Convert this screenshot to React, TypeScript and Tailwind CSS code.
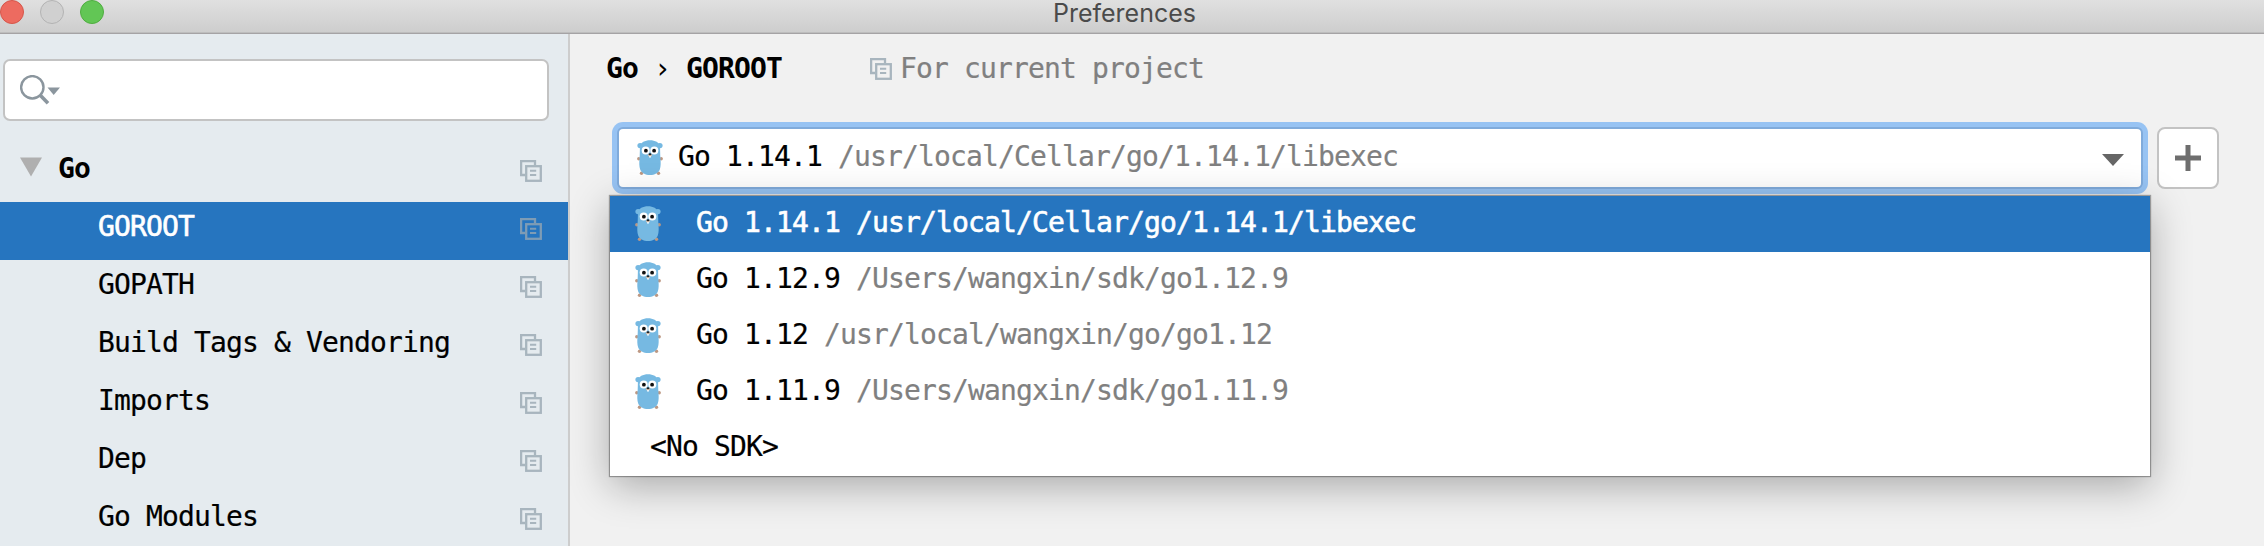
const mono =
  "font-['DejaVu_Sans_Mono','Liberation_Mono',monospace] text-[28px] leading-[32px] tracking-[-0.86px] whitespace-pre";

function CopyIcon({ className = "text-[#a8b5be]" }: { className?: string }) {
  return (
    <svg width="22" height="22" viewBox="0 0 22 22" fill="none" stroke="currentColor" strokeWidth="2.3" className={`shrink-0 ${className}`}>
      <path d="M5 15H1.100V1.100H15V5" />
      <rect x="6.200" y="6.200" width="14.600" height="14.600" />
      <path d="M10 10.700h6.200M10 15.100h6.200" strokeWidth="2" />
    </svg>
  );
}

function Gopher() {
  return (
    <svg width="26" height="35" viewBox="0 0 26 35" className="shrink-0">
      <g fill="#bd9883">
        <circle cx="1.800" cy="18.700" r="1.700" />
        <circle cx="24.200" cy="18.700" r="1.700" />
        <circle cx="4.500" cy="33.300" r="1.700" />
        <circle cx="21.500" cy="33.300" r="1.700" />
      </g>
      <g fill="#76b9e2">
        <circle cx="3.100" cy="5.600" r="2.700" />
        <circle cx="22.900" cy="5.600" r="2.700" />
        <path d="M13 .3C18 .3 22.500 2.500 23 6.500c.2 3 .1 7 .5 12.500.3 3.500.4 7-.7 10.500C21.600 33 17.500 35 13 35S4.400 33 3.200 29.500C2.100 26 2.200 22.500 2.500 19 2.900 13.500 2.800 9.500 3 6.500 3.500 2.500 8 .3 13 .3Z" />
      </g>
      <circle cx="8.700" cy="10.500" r="4" fill="#fff" />
      <circle cx="17.300" cy="10.500" r="4" fill="#fff" />
      <circle cx="8.900" cy="10.700" r="1.900" fill="#111" />
      <circle cx="17.100" cy="10.700" r="1.900" fill="#111" />
      <ellipse cx="13" cy="15.300" rx="2.100" ry="1.200" fill="#d9c0ac" />
      <ellipse cx="13" cy="14.200" rx="1.400" ry="1" fill="#222" />
      <rect x="12.200" y="15.900" width="1.600" height="1.700" fill="#fff" />
    </svg>
  );
}

const pages = ["GOROOT", "GOPATH", "Build Tags & Vendoring", "Imports", "Dep", "Go Modules"];

const sdks = [
  { name: "Go 1.14.1", path: "/usr/local/Cellar/go/1.14.1/libexec" },
  { name: "Go 1.12.9", path: "/Users/wangxin/sdk/go1.12.9" },
  { name: "Go 1.12", path: "/usr/local/wangxin/go/go1.12" },
  { name: "Go 1.11.9", path: "/Users/wangxin/sdk/go1.11.9" },
];

function TitleBar() {
  return (
    <header className="relative flex h-[34px] shrink-0 justify-center border-b border-[#a5a3a5] bg-linear-to-b from-[#e0e0e0] to-[#cdcdcd] shadow-[inset_0_-1px_0_#bdbdbd]">
      <div className="absolute top-0 left-0 flex gap-4">
        <span className="size-6 rounded-full border border-[#d6564a] bg-[#ed6b60]" />
        <span className="size-6 rounded-full border border-[#b3b3b3] bg-[#d0d0d0]" />
        <span className="size-6 rounded-full border border-[#4fad40] bg-[#62c655]" />
      </div>
      <h1 className="mr-[15px] h-[32px] font-['Inter',sans-serif] text-[25px] leading-[26px] text-[#4b4b4b]">Preferences</h1>
    </header>
  );
}

function Sidebar() {
  return (
    <aside className="w-[570px] shrink-0 border-r-2 border-[#cdcdcd] bg-[#e5ebef]">
      <div className="mt-[25px] ml-[3px] flex h-[62px] w-[546px] rounded-[7px] border-2 border-[#c3c3c3] bg-white pt-[14px] pl-[15px]">
        <svg width="42" height="32" viewBox="0 0 42 32" className="text-[#8b969e]">
          <circle cx="12.300" cy="12.300" r="11.200" fill="none" stroke="currentColor" strokeWidth="2.400" />
          <path d="m20.500 20.500 7.500 7.700" stroke="currentColor" strokeWidth="3.600" />
          <path d="M27.500 12.500H40L33.700 20Z" fill="currentColor" />
        </svg>
      </div>
      <nav className="mt-[23px]">
        <div className="flex h-[58px] items-start pr-[26px] pl-5">
          <svg width="22" height="20" viewBox="0 0 22 20" className="mt-[13px]">
            <path d="M0 0.500h22L11 19.500Z" fill="#afafaf" />
          </svg>
          <span className={`mt-[9px] ml-4 flex-1 font-bold text-black ${mono}`}>Go</span>
          <CopyIcon className="mt-4 text-[#a8b5be]" />
        </div>
        {pages.map((page, i) => (
          <div key={page} className={`flex h-[58px] items-start pr-[26px] pl-[98px] ${i === 0 ? "bg-[#2675bf] text-white" : "text-black"}`}>
            <span className={`mt-[9px] flex-1 ${i === 0 ? "[-webkit-text-stroke:0.6px_white]" : "[-webkit-text-stroke:0.2px_black]"} ${mono}`}>{page}</span>
            <CopyIcon className={i === 0 ? "mt-4 text-[#7e9cb5]" : "mt-4 text-[#a8b5be]"} />
          </div>
        ))}
      </nav>
    </aside>
  );
}

function SdkPopup() {
  return (
    <ul className="absolute top-[74px] left-[-2px] w-[1540px] bg-white shadow-[0_0_1px_1px_rgba(0,0,0,0.32),0_10px_38px_rgba(0,0,0,0.3)]">
      {sdks.map((sdk, i) => (
        <li key={sdk.name} className={`flex h-14 pl-[25px] ${i === 0 ? "bg-[#2675bf] text-white" : "text-black"}`}>
          <span className="mt-[10px]">
            <Gopher />
          </span>
          <span className={`mt-[11px] ml-[35px] ${i === 0 ? "[-webkit-text-stroke:0.6px_currentColor]" : "[-webkit-text-stroke:0.2px_currentColor]"} ${mono}`}>
            {sdk.name} <span className={i === 0 ? "text-white" : "text-[#808080]"}>{sdk.path}</span>
          </span>
        </li>
      ))}
      <li className={`h-14 pt-[11px] pl-[40px] text-black [-webkit-text-stroke:0.2px_currentColor] ${mono}`}>{"<No SDK>"}</li>
    </ul>
  );
}

function Content() {
  return (
    <main className="flex-1 bg-[#f1f1f1] pl-9">
      <div className="flex h-[88px] items-start pt-[19px] text-black">
        <div className={mono}>
          <b>Go</b> › <b>GOROOT</b>
        </div>
        <CopyIcon className="mt-[5px] ml-[88px] text-[#a8b5be]" />
        <span className={`ml-2 text-[#808080] [-webkit-text-stroke:0.2px_currentColor] ${mono}`}>For current project</span>
      </div>
      <div className="flex items-start pl-[6px]">
        <div className="relative">
          <div className="h-[72px] w-[1536px] rounded-[11px] bg-[#97c3f3] p-[5px]">
            <div className="flex h-full items-start rounded-md border-2 border-[#80abdb] bg-white pl-[18px]">
              <span className="mt-[11px]">
                <Gopher />
              </span>
              <span className={`mt-[12px] ml-[15px] flex-1 text-black [-webkit-text-stroke:0.2px_currentColor] ${mono}`}>
                Go 1.14.1 <span className="text-[#808080]">/usr/local/Cellar/go/1.14.1/libexec</span>
              </span>
              <svg width="22" height="12" viewBox="0 0 22 12" className="mt-[25px] mr-[17px]">
                <path d="M0 0h22L11 12Z" fill="#666" />
              </svg>
            </div>
          </div>
          <SdkPopup />
        </div>
        <button aria-label="Add SDK" className="mt-[5px] ml-[9px] flex size-[62px] items-center justify-center rounded-[8px] border-2 border-[#c3c3c3] bg-white">
          <svg width="26" height="26" viewBox="0 0 26 26">
            <path d="M13 0v26M0 13h26" stroke="#6e6e6e" strokeWidth="5" />
          </svg>
        </button>
      </div>
    </main>
  );
}

export default function App() {
  return (
    <div className="flex h-[546px] w-[2264px] flex-col overflow-hidden">
      <TitleBar />
      <div className="flex min-h-0 flex-1">
        <Sidebar />
        <Content />
      </div>
    </div>
  );
}
